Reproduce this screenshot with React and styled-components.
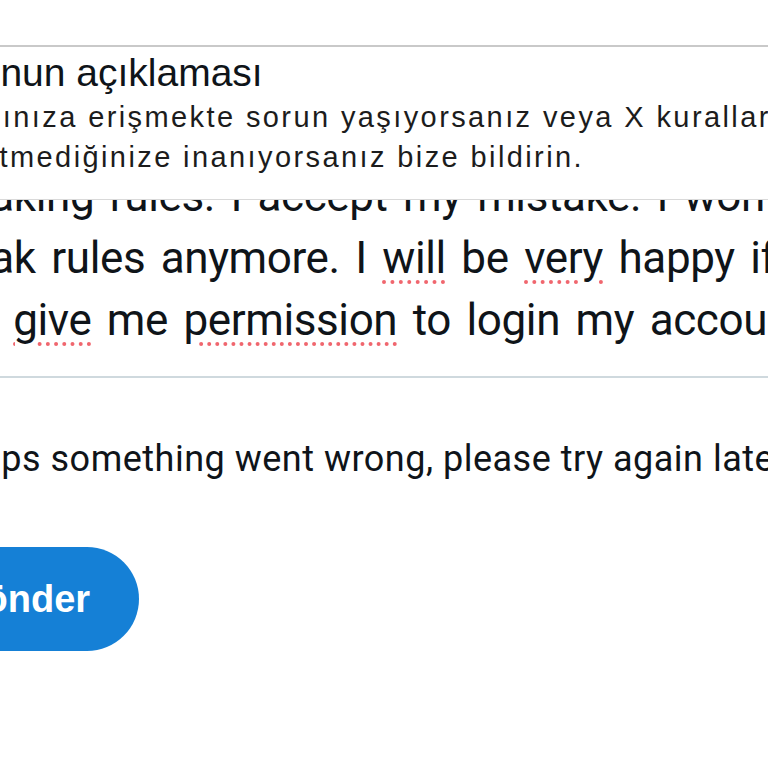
import React from "react";
import styled, { createGlobalStyle } from "styled-components";

const GlobalStyle = createGlobalStyle`
  html, body {
    margin: 0;
    padding: 0;
    background: #ffffff;
    overflow: hidden;
  }
  body {
    width: 768px;
    height: 768px;
  }
`;

const Frame = styled.div`
  display: flex;
  flex-direction: column;
  align-items: flex-start;
  width: 1300px;
  margin-left: -90px;
  padding-top: 45px;
`;

const Field = styled.div`
  width: 100%;
  border-top: 2px solid #c9c9c9;
  border-bottom: 2px solid #cfd9de;
  display: flex;
  flex-direction: column;
`;

const Label = styled.div`
  position: relative;
  z-index: 1;
  background: #ffffff;
  padding: 3px 0 22px 8px;
  border-bottom: 1px solid #d9d9d9;
  font-family: "Liberation Sans", Arial, sans-serif;
  color: #0f1419;
`;

const Title = styled.div`
  font-size: 39px;
  line-height: 45px;
  white-space: nowrap;
  margin-bottom: 2px;
`;

const Hint = styled.div`
  margin-left: -11px;
  font-size: 29px;
  line-height: 40px;
  letter-spacing: 2.4px;
  white-space: nowrap;
  color: #1c1c1c;
`;

const Body = styled.div`
  margin-top: -35px;
  padding: 0 0 25px 19px;
  font-family: Roboto, "Liberation Sans", sans-serif;
  font-size: 44px;
  line-height: 62px;
  letter-spacing: -0.4px;
  word-spacing: 5px;
  color: #0f1419;
`;

const Line = styled.div`
  white-space: nowrap;
`;

const Misspelled = styled.span`
  text-decoration: underline dotted #f0666e;
  text-decoration-thickness: 4px;
  text-underline-offset: 7px;
`;

const ErrorText = styled.p`
  margin: 59px 0 0;
  padding-left: 45px;
  font-family: Roboto, "Liberation Sans", sans-serif;
  font-size: 36px;
  line-height: 44px;
  letter-spacing: 0.5px;
  color: #0f1419;
  white-space: nowrap;
`;

const SendButton = styled.button`
  margin: 66px 0 0 -2px;
  height: 104px;
  padding: 0 49px 0 47px;
  border: none;
  border-radius: 52px;
  background: #1580d6;
  color: #ffffff;
  font-family: "Liberation Sans", Arial, sans-serif;
  font-weight: 700;
  font-size: 38px;
  cursor: pointer;
`;

export default function App() {
  return (
    <>
      <GlobalStyle />
      <Frame>
        <Field>
          <Label>
            <Title>Sorunun açıklaması</Title>
            <Hint>Hesabınıza erişmekte sorun yaşıyorsanız veya X kurallarını</Hint>
            <Hint>ihlal etmediğinize inanıyorsanız bize bildirin.</Hint>
          </Label>
          <Body>
            <Line>breaking rules. I accept my mistake. I won't</Line>
            <Line>
              break rules anymore. I <Misspelled>will</Misspelled> be{" "}
              <Misspelled>very</Misspelled> happy if
            </Line>
            <Line>
              you <Misspelled>give</Misspelled> me{" "}
              <Misspelled>permission</Misspelled> to login my account
            </Line>
          </Body>
        </Field>
        <ErrorText>Oops something went wrong, please try again later.</ErrorText>
        <SendButton type="button">Gönder</SendButton>
      </Frame>
    </>
  );
}
